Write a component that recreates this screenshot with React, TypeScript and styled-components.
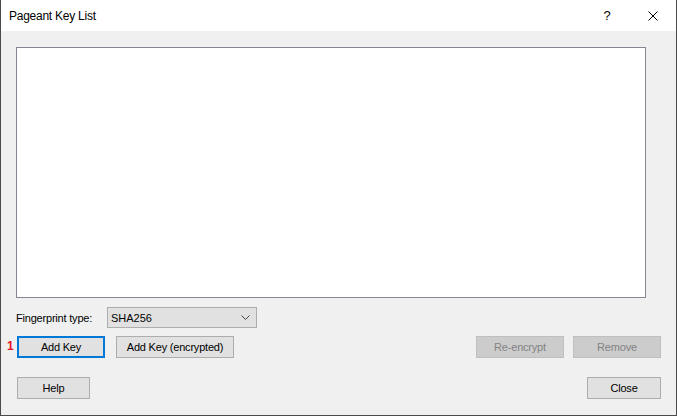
import React from "react";
import styled, { createGlobalStyle } from "styled-components";

const GlobalStyle = createGlobalStyle`
  html, body { margin: 0; padding: 0; background: #ffffff; }
  * { box-sizing: border-box; }
`;

const Window = styled.div`
  width: 677px;
  height: 416px;
  display: flex;
  flex-direction: column;
  border-left: 1px solid #4a4a4a;
  border-right: 1px solid #4a4a4a;
  border-bottom: 1px solid #4a4a4a;
  font-family: "Liberation Sans", Arial, sans-serif;
  color: #000;
`;

const TitleBar = styled.div`
  height: 31px;
  flex: none;
  display: flex;
  align-items: center;
  background: #ffffff;
  padding-left: 8px;
`;

const Title = styled.div`
  flex: 1;
  font-size: 12px;
  letter-spacing: -0.25px;
  padding-top: 1px;
`;

const CaptionButton = styled.div`
  width: 46px;
  height: 31px;
  display: flex;
  align-items: center;
  justify-content: center;
  font-size: 13px;
`;

const Body = styled.div`
  flex: 1;
  background: #f0f0f0;
  padding: 16px 15px 0 15px;
  display: flex;
  flex-direction: column;
`;

const ListBox = styled.div`
  width: 630px;
  height: 251px;
  background: #ffffff;
  border: 1px solid #828790;
`;

const FingerRow = styled.div`
  margin-top: 9px;
  height: 21px;
  display: flex;
  align-items: center;
`;

const Label = styled.div`
  width: 91px;
  font-size: 11px;
  letter-spacing: -0.2px;
`;

const Combo = styled.div`
  width: 150px;
  height: 21px;
  background: #e1e1e1;
  border: 1px solid #adadad;
  display: flex;
  align-items: center;
  justify-content: space-between;
  padding: 0 6px 0 3px;
  font-size: 11px;
`;

const ButtonRow = styled.div<{ $top: number }>`
  position: relative;
  margin-top: ${(p) => p.$top}px;
  height: 22px;
  display: flex;
  align-items: stretch;
`;

const Spacer = styled.div`
  flex: 1;
`;

const Button = styled.div<{ $w: number; $ml?: number; $disabled?: boolean; $focused?: boolean }>`
  width: ${(p) => p.$w}px;
  margin-left: ${(p) => p.$ml ?? 0}px;
  display: flex;
  align-items: center;
  justify-content: center;
  font-size: 11px;
  letter-spacing: -0.2px;
  background: ${(p) => (p.$disabled ? "#cccccc" : "#e1e1e1")};
  border: ${(p) =>
    p.$focused ? "2px solid #0078d7" : p.$disabled ? "1px solid #bfbfbf" : "1px solid #adadad"};
  color: ${(p) => (p.$disabled ? "#838383" : "#000")};
`;

const Marker = styled.div`
  position: absolute;
  left: -9px;
  top: 3px;
  font-size: 12px;
  font-weight: bold;
  color: #e81123;
`;

export default function App() {
  return (
    <>
      <GlobalStyle />
      <Window>
        <TitleBar>
          <Title>Pageant Key List</Title>
          <CaptionButton>?</CaptionButton>
          <CaptionButton>
            <svg width="10" height="10" viewBox="0 0 10 10">
              <path d="M0.5 0.5 L9.5 9.5 M9.5 0.5 L0.5 9.5" stroke="#000" strokeWidth="1" fill="none" />
            </svg>
          </CaptionButton>
        </TitleBar>
        <Body>
          <ListBox />
          <FingerRow>
            <Label>Fingerprint type:</Label>
            <Combo>
              <span>SHA256</span>
              <svg width="9" height="5" viewBox="0 0 9 5">
                <path d="M0.5 0.5 L4.5 4.5 L8.5 0.5" stroke="#444" strokeWidth="1" fill="none" />
              </svg>
            </Combo>
          </FingerRow>
          <ButtonRow $top={8}>
            <Marker>1</Marker>
            <Button $w={88} $ml={1} $focused>Add Key</Button>
            <Button $w={118} $ml={11}>Add Key (encrypted)</Button>
            <Spacer />
            <Button $w={88} $disabled>Re-encrypt</Button>
            <Button $w={88} $ml={9} $disabled>Remove</Button>
          </ButtonRow>
          <ButtonRow $top={19}>
            <Button $w={73} $ml={1}>Help</Button>
            <Spacer />
            <Button $w={74}>Close</Button>
          </ButtonRow>
        </Body>
      </Window>
    </>
  );
}
